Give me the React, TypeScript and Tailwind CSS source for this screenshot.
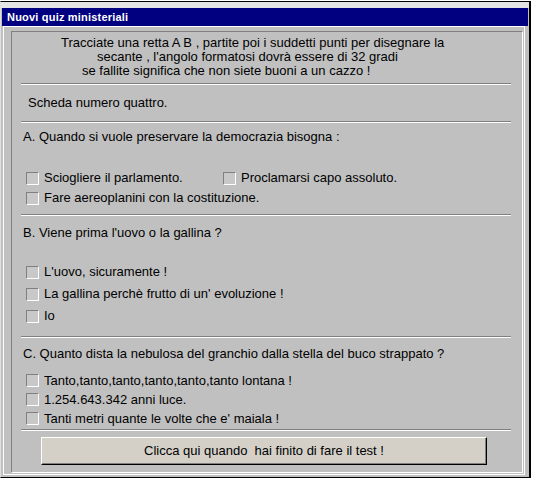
const font = "font-['Liberation_Sans',Arial,sans-serif]";

function Sep({ mt }: { mt: string }) {
  return <div className={`${mt} ml-[8px] mr-[11px] h-[2px] border-t border-b border-t-[#808080] border-b-white`} />;
}

function Box() {
  return (
    <span className="h-[13px] w-[13px] shrink-0 border border-t-[#808080] border-l-[#808080] border-r-white border-b-white bg-[#c8c8c8]" />
  );
}

function Option({ label, h, className = "" }: { label: string; h: string; className?: string }) {
  return (
    <div className={`flex items-center gap-[5px] ${h} ${className}`}>
      <Box />
      <span className="whitespace-pre">{label}</span>
    </div>
  );
}

export default function App() {
  return (
    <div className={`h-[480px] w-[534px] bg-white pt-px text-[13px] text-black ${font}`}>
      <div className="flex h-[477px] w-[531px] flex-col border-t border-r-2 border-b border-l border-black border-l-[#dfdfdf] bg-[#c0c0c0]">
        <div className="h-[6px] bg-[#e4e4e4]" />
        <div className="mx-px h-[18px] bg-[#000080] px-[5px] text-[11px] font-bold leading-[18px] tracking-[0.2px] text-white">
          Nuovi quiz ministeriali
        </div>
        <div className="mb-[2px] ml-[2px] mr-[4px] flex flex-1 border border-white pb-px pl-[7px] pr-px pt-[4px]">
          <div className="flex flex-1 flex-col border border-t-[#808080] border-l-[#808080] border-r-white border-b-white pl-px">
            <div className="mt-[4px] whitespace-pre">
              <div className="h-[14px] pl-[48px] leading-[14px]">
                Tracciate una retta A B , partite poi i suddetti punti per disegnare la
              </div>
              <div className="h-[14px] pl-[84px] leading-[14px]">
                secante , l'angolo formatosi dovrà essere di 32 gradi
              </div>
              <div className="h-[14px] pl-[69px] leading-[14px]">
                se fallite significa che non siete buoni a un cazzo !
              </div>
            </div>
            <Sep mt="mt-[5px]" />
            <div className="mt-[11px] h-[14px] pl-[15px] leading-[14px]">Scheda numero quattro.</div>
            <Sep mt="mt-[11px]" />

            <div className="mt-[7px] h-[14px] pl-[10px] leading-[14px]">
              A. Quando si vuole preservare la democrazia bisogna :
            </div>
            <div className="mt-[24px] flex pl-[13px]">
              <Option label="Sciogliere il parlamento." h="h-[20px]" className="w-[197px]" />
              <Option label="Proclamarsi capo assoluto." h="h-[20px]" />
            </div>
            <div className="pl-[13px]">
              <Option label="Fare aereoplanini con la costituzione." h="h-[20px]" />
            </div>
            <Sep mt="mt-[6px]" />

            <div className="mt-[10px] h-[14px] pl-[10px] leading-[14px]">B. Viene prima l'uovo o la gallina ?</div>
            <div className="mt-[21px] pl-[13px]">
              <Option label="L'uovo, sicuramente !" h="h-[22px]" />
              <Option label="La gallina perchè frutto di un' evoluzione !" h="h-[22px]" />
              <Option label="Io" h="h-[22px]" />
            </div>
            <Sep mt="mt-[9px]" />

            <div className="mt-[9px] h-[14px] pl-[10px] leading-[14px]">
              C. Quanto dista la nebulosa del granchio dalla stella del buco strappato ?
            </div>
            <div className="mt-[10px] pl-[13px]">
              <Option label="Tanto,tanto,tanto,tanto,tanto,tanto lontana !" h="h-[19px]" />
              <Option label="1.254.643.342 anni luce." h="h-[19px]" />
              <Option label="Tanti metri quante le volte che e' maiala !" h="h-[19px]" />
            </div>
            <Sep mt="mt-px" />

            <div className="ml-[28px] mt-[6px] w-[446px]">
              <button
                type="button"
                className="flex h-[28px] w-full items-center justify-center whitespace-pre border border-t-white border-l-white border-r-black border-b-black bg-[#d4d0c8] shadow-[inset_-1px_-1px_0_#808080]"
              >
                Clicca qui quando  hai finito di fare il test !
              </button>
            </div>
          </div>
        </div>
      </div>
    </div>
  );
}
